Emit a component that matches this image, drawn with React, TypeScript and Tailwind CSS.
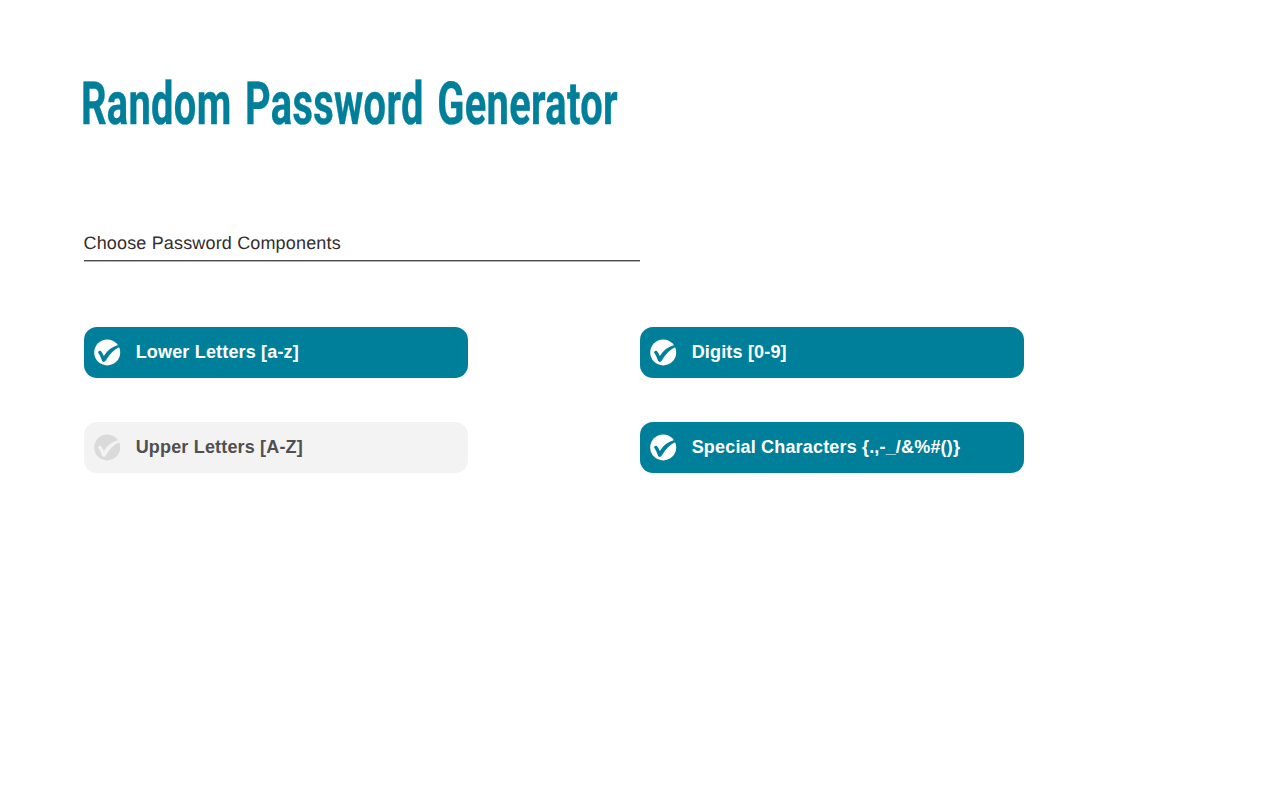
import { useState } from "react";

const OPTIONS = [
  { label: "Lower Letters [a-z]", on: true },
  { label: "Digits [0-9]", on: true },
  { label: "Upper Letters [A-Z]", on: false },
  { label: "Special Characters {.,-_/&%#()}", on: true },
];

function CheckBadge({ on }: { on: boolean }) {
  return (
    <svg viewBox="-0.2 -0.4 27 27" className="h-[27px] w-[27px] shrink-0">
      <circle cx="13" cy="13" r="13" className={on ? "fill-white" : "fill-[#dadada]"} />
      <path
        d="M3.8 12.8 Q4.8 10.9 6.7 11.6 Q8.5 13.6 9.6 16.7 Q14.5 8 24 5.5 L25.4 7.6 Q17.4 11 11.6 21.2 Q9.8 23.7 8 21.5 Q6.5 16.8 3.8 12.8 Z"
        className={on ? "fill-[#007f9b]" : "fill-[#f3f3f3]"}
      />
    </svg>
  );
}

export default function App() {
  const [options, setOptions] = useState(OPTIONS);
  const toggle = (index: number) =>
    setOptions(options.map((o, i) => (i === index ? { ...o, on: !o.on } : o)));

  return (
    <main className="min-h-screen bg-white pl-[84px] pt-[68px] font-['Liberation_Sans',sans-serif] [text-rendering:geometricPrecision]">
      <h1 className="-ml-[3px] h-[72px] w-[840px] origin-left scale-x-[0.67] whitespace-nowrap font-['Roboto',sans-serif] text-[59.5px] font-bold leading-[73px] tracking-[0.45px] text-[#007f9b] [-webkit-text-stroke:0.4px_#007f9b] [word-spacing:5px]">
        Random Password Generator
      </h1>
      <h2 className="mt-[88px] h-[33px] w-[556px] border-b border-[#4d4849] text-[18px] leading-[30px] tracking-[0.16px] text-[#352d2d] shadow-[0_1px_0_#b5b3b3] -indent-[0.5px]">
        Choose Password Components
      </h2>
      <div className="mt-[66px] grid grid-cols-[384px_384px] gap-x-[172px] gap-y-[44px]">
        {options.map(({ label, on }, i) => (
          <button
            key={label}
            onClick={() => toggle(i)}
            className={`flex h-[51px] items-center gap-[14.7px] rounded-[13px] pl-2.5 text-left text-[18px] font-bold tracking-[0.17px] ${
              on ? "bg-[#007f9b] text-white" : "bg-[#f3f3f3] text-[#505050]"
            }`}
          >
            <CheckBadge on={on} />
            <span>{label}</span>
          </button>
        ))}
      </div>
    </main>
  );
}
